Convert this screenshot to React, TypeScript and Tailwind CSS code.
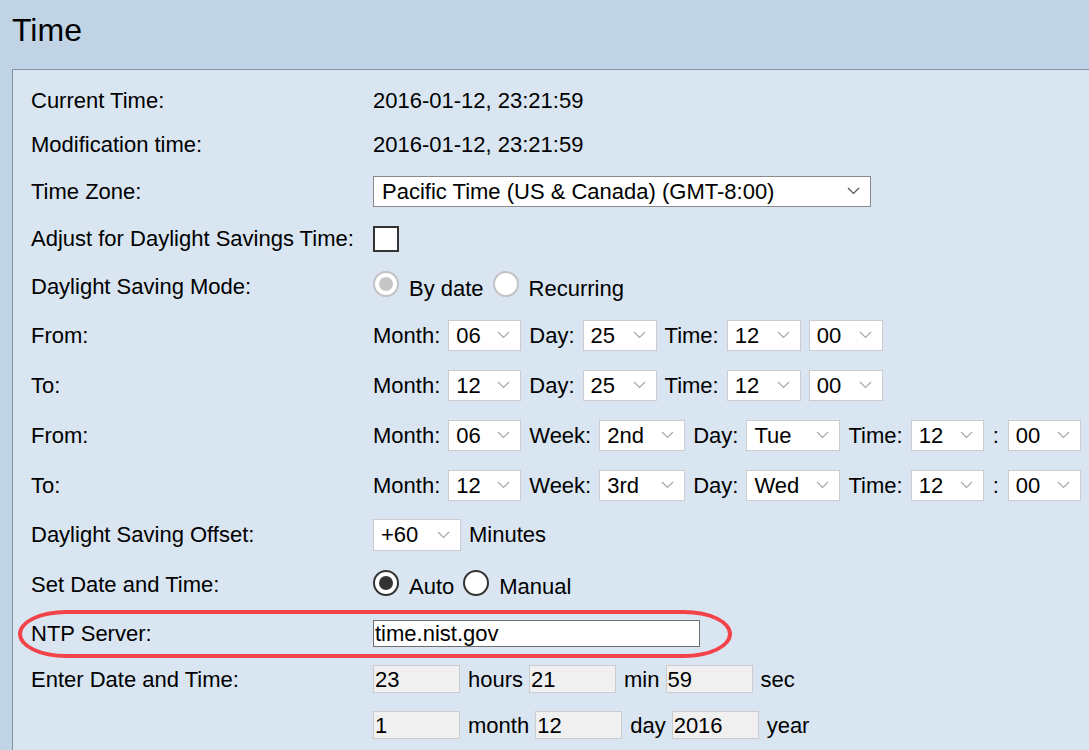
import React from 'react';

const Chevron: React.FC<{ dark?: boolean }> = ({ dark }) => (
  <svg width="13" height="8" viewBox="0 0 13 8" className="shrink-0">
    <polyline points="1,1 6.5,6.5 12,1" fill="none" stroke={dark ? '#555555' : '#a8a8a8'} strokeWidth="1.2" />
  </svg>
);

const Select: React.FC<{ value: string; w: string }> = ({ value, w }) => (
  <div className={`flex h-[31px] items-center justify-between border border-[#cccccc] bg-white pl-[7px] pr-[10px] ${w}`}>
    <span>{value}</span>
    <Chevron />
  </div>
);

const Radio: React.FC<{ checked?: boolean; disabled?: boolean }> = ({ checked, disabled }) => {
  const ring = disabled ? 'border-[#c2c2c2]' : 'border-[#333333]';
  const dot = disabled ? 'bg-[#c6c6c6]' : 'bg-[#333333]';
  return (
    <div className={`mb-[4px] flex h-[26px] w-[26px] shrink-0 items-center justify-center rounded-full border-2 bg-white ${ring}`}>
      {checked && <div className={`h-[14px] w-[14px] rounded-full ${dot}`} />}
    </div>
  );
};

const ReadOnlyBox: React.FC<{ value: string }> = ({ value }) => (
  <div className="flex h-[28px] w-[87px] items-center border border-[#cccccc] bg-[#f0f0f0] pl-[1px]">{value}</div>
);

const Row: React.FC<{ label?: string; h: string; children?: React.ReactNode }> = ({ label, h, children }) => (
  <div className={`flex items-center ${h}`}>
    <div className="w-[342px] shrink-0">{label}</div>
    <div className="flex items-center">{children}</div>
  </div>
);

const App: React.FC = () => {
  return (
    <div
      className="h-[750px] w-[1089px] overflow-hidden bg-[#c1d4e6] text-[22px] text-black"
      style={{ fontFamily: '"Liberation Sans", Arial, sans-serif' }}
    >
      {/* Header */}
      <div className="h-[69px] px-[12px] pt-[12px]">
        <h1 className="text-[32px] leading-[36px]">Time</h1>
      </div>

      {/* Panel */}
      <div className="relative ml-[12px] h-[681px] border-l border-t border-[#8194a8] bg-[#d9e5f1] pl-[18px] pt-[8px]">
        <Row label="Current Time:" h="h-[44px]">2016-01-12, 23:21:59</Row>
        <Row label="Modification time:" h="h-[45px]">2016-01-12, 23:21:59</Row>
        <Row label="Time Zone:" h="h-[48px]">
          <div className="flex h-[31px] w-[498px] items-center justify-between border border-[#8a8a8a] bg-white pl-[8px] pr-[10px]">
            <span>Pacific Time (US &amp; Canada) (GMT-8:00)</span>
            <Chevron dark />
          </div>
        </Row>
        <Row label="Adjust for Daylight Savings Time:" h="h-[47px]">
          <div className="h-[26px] w-[26px] border-2 border-[#333333] bg-white" />
        </Row>
        <Row label="Daylight Saving Mode:" h="h-[48px]">
          <Radio checked disabled />
          <span className="ml-[10px] mt-[4px]">By date</span>
          <span className="ml-[9px]">
            <Radio disabled />
          </span>
          <span className="ml-[10px] mt-[4px]">Recurring</span>
        </Row>
        <Row label="From:" h="h-[50px]">
          <div className="flex items-center gap-[8px]">
            <span>Month:</span>
            <Select value="06" w="w-[73px]" />
            <span>Day:</span>
            <Select value="25" w="w-[74px]" />
            <span>Time:</span>
            <Select value="12" w="w-[74px]" />
            <Select value="00" w="w-[74px]" />
          </div>
        </Row>
        <Row label="To:" h="h-[50px]">
          <div className="flex items-center gap-[8px]">
            <span>Month:</span>
            <Select value="12" w="w-[73px]" />
            <span>Day:</span>
            <Select value="25" w="w-[74px]" />
            <span>Time:</span>
            <Select value="12" w="w-[74px]" />
            <Select value="00" w="w-[74px]" />
          </div>
        </Row>
        <Row label="From:" h="h-[50px]">
          <div className="flex items-center gap-[8px]">
            <span>Month:</span>
            <Select value="06" w="w-[73px]" />
            <span>Week:</span>
            <Select value="2nd" w="w-[86px]" />
            <span>Day:</span>
            <Select value="Tue" w="w-[94px]" />
            <span>Time:</span>
            <Select value="12" w="w-[73px]" />
            <span className="mx-[1px]">:</span>
            <Select value="00" w="w-[73px]" />
          </div>
        </Row>
        <Row label="To:" h="h-[50px]">
          <div className="flex items-center gap-[8px]">
            <span>Month:</span>
            <Select value="12" w="w-[73px]" />
            <span>Week:</span>
            <Select value="3rd" w="w-[86px]" />
            <span>Day:</span>
            <Select value="Wed" w="w-[94px]" />
            <span>Time:</span>
            <Select value="12" w="w-[73px]" />
            <span className="mx-[1px]">:</span>
            <Select value="00" w="w-[73px]" />
          </div>
        </Row>
        <Row label="Daylight Saving Offset:" h="h-[49px]">
          <div className="flex h-[32px] w-[88px] items-center justify-between border border-[#cccccc] bg-white pl-[7px] pr-[10px]">
            <span>+60</span>
            <Chevron />
          </div>
          <span className="ml-[8px]">Minutes</span>
        </Row>
        <Row label="Set Date and Time:" h="h-[51px]">
          <Radio checked />
          <span className="ml-[10px] mt-[4px]">Auto</span>
          <span className="ml-[9px]">
            <Radio />
          </span>
          <span className="ml-[10px] mt-[4px]">Manual</span>
        </Row>
        <Row label="NTP Server:" h="h-[46px]">
          <div className="flex h-[27px] w-[327px] items-center border border-[#707070] bg-white pl-[1px]">time.nist.gov</div>
        </Row>
        <Row label="Enter Date and Time:" h="h-[46px]">
          <ReadOnlyBox value="23" />
          <span className="ml-[8px] mr-[6px]">hours</span>
          <ReadOnlyBox value="21" />
          <span className="ml-[8px] mr-[6px]">min</span>
          <ReadOnlyBox value="59" />
          <span className="ml-[8px]">sec</span>
        </Row>
        <Row h="h-[46px]">
          <ReadOnlyBox value="1" />
          <span className="ml-[8px] mr-[6px]">month</span>
          <ReadOnlyBox value="12" />
          <span className="ml-[8px] mr-[6px]">day</span>
          <ReadOnlyBox value="2016" />
          <span className="ml-[8px]">year</span>
        </Row>

        {/* Red annotation around NTP Server */}
        <div className="pointer-events-none absolute left-[5px] top-[540px] h-[48px] w-[714px] rounded-[48px_/_24px] border-4 border-[#f2434b]" />
      </div>
    </div>
  );
};

export default App;
